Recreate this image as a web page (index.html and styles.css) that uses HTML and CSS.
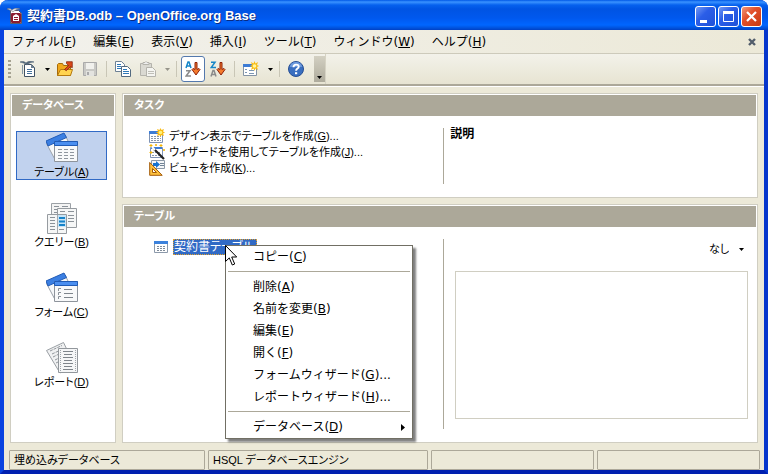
FILE: index.html
```html
<!DOCTYPE html>
<html lang="ja">
<head>
    <meta charset="UTF-8">
    <meta name="viewport" content="width=device-width, initial-scale=1.0">
    <title>契約書DB.odb – OpenOffice.org Base</title>
    <link rel="stylesheet" href="styles.css">
</head>
<body>
    <div class="window">
        <header class="titlebar">
            <svg class="app-icon" width="16" height="16" viewBox="0 0 16 16">
                <path d="M3.500 2.500h8l3 3v10h-11z" fill="#fff" stroke="#5a5a6a"/>
                <path d="M0 1c3-1 4 0 5 1 2-2 5-2 8-1-3 0-5 1-7 3C4 2 2 2 0 1z" fill="#e4e8f0" stroke="#666" stroke-width=".5"/>
                <rect x="4" y="5" width="10" height="10" rx="1" fill="#8c1d30"/>
                <path d="M6 8l3-2 3 2v5H6z" fill="#fff"/>
                <path d="M7 9.500h4M7 11.500h4" stroke="#8c1d30"/>
            </svg>
            <h1>契約書DB.odb – OpenOffice.org Base</h1>
            <div class="window-buttons">
                <button class="win-btn" aria-label="最小化"><svg width="19" height="19" viewBox="0 0 19 19"><path d="M4 13h7v3H4z" fill="#fff"/></svg></button>
                <button class="win-btn" aria-label="最大化"><svg width="19" height="19" viewBox="0 0 19 19"><path d="M4.500 5.500h10v9h-10z" fill="none" stroke="#fff"/><path d="M4 4h11v3H4z" fill="#fff"/></svg></button>
                <button class="win-btn close" aria-label="閉じる"><svg width="19" height="19" viewBox="0 0 19 19"><path d="M5 5l9 9M14 5l-9 9" stroke="#fff" stroke-width="2.200"/></svg></button>
            </div>
        </header>

        <nav class="menubar">
            <button>ファイル(<u>F</u>)</button>
            <button>編集(<u>E</u>)</button>
            <button>表示(<u>V</u>)</button>
            <button>挿入(<u>I</u>)</button>
            <button>ツール(<u>T</u>)</button>
            <button>ウィンドウ(<u>W</u>)</button>
            <button>ヘルプ(<u>H</u>)</button>
            <button class="close-doc" aria-label="ドキュメントを閉じる"><svg width="8" height="8" viewBox="0 0 8 8"><path d="M1 1l6 6M7 1L1 7" stroke="#525d6b" stroke-width="2.400"/></svg></button>
        </nav>

        <div class="toolbar">
            <span class="grip"></span>
            <button class="tool" aria-label="新規作成">
                <svg width="16" height="16" viewBox="0 0 16 16">
                    <path d="M4.500 3.500h7l3 3v9h-10z" fill="#fff" stroke="#3f5163"/>
                    <path d="M11 3v4h4z" fill="#6f8191"/>
                    <path d="M0 1c3-1 5 0 6 1 2-2 5-2 8-1-3 0-5 1-7 3-2-2-4-2-7-3z" fill="#54687a" stroke="#54687a" stroke-width=".6"/>
                    <path d="M7 8.500h5M7 10.500h5M7 12.500h5" stroke="#45719b"/>
                    <path d="M2.500 4v9" stroke="#8798a6"/>
                </svg>
            </button>
            <button class="drop" aria-label="新規作成メニュー"><svg width="5" height="3" viewBox="0 0 5 3"><path d="M0 0h5L2.500 3z"/></svg></button>
            <button class="tool" aria-label="開く">
                <svg width="16" height="16" viewBox="0 0 16 16">
                    <path d="M.5 14.500V3.500l1-1h4l1 2h7v10z" fill="#f0a81c" stroke="#a66a08"/>
                    <path d="M.5 14.500l3-6h12l-2 6z" fill="#ffd34f" stroke="#b57a10"/>
                    <path d="M7.500 8.500l4-4-2-2V.7h5.800v6l-2-1-4 4z" fill="#d9481a" stroke="#7c1d0a" stroke-width=".7"/>
                </svg>
            </button>
            <button class="tool" aria-label="保存" disabled>
                <svg width="16" height="16" viewBox="0 0 16 16">
                    <path d="M1.500 1.500h13v13h-13z" fill="#c9c9c5" stroke="#aaa"/>
                    <path d="M4 2h8v6H4z" fill="#f1f1ed"/><path d="M4 10h8v5H4z" fill="#e3e3df"/>
                    <path d="M5 11h2v3H5z" fill="#aaa"/>
                </svg>
            </button>
            <span class="separator"></span>
            <button class="tool" aria-label="コピー">
                <svg width="16" height="16" viewBox="0 0 16 16">
                    <path d="M.5.5h6l3 3v7h-9z" fill="#fff" stroke="#6d8194"/>
                    <path d="M2 3.500h4M2 5.500h4M2 7.500h4" stroke="#2f79b8"/>
                    <path d="M6.500 5.500h6l3 3v7h-9z" fill="#fff" stroke="#536a80"/>
                    <path d="M8 8.500h4M8 10.500h6M8 12.500h6" stroke="#2f79b8"/>
                </svg>
            </button>
            <button class="tool" aria-label="貼り付け" disabled>
                <svg width="16" height="16" viewBox="0 0 16 16">
                    <path d="M.5 2.500h11v12H.5z" fill="#dad9d2" stroke="#b4b3ac"/>
                    <path d="M3 1.500h2l1-1 1 1h2v2H3z" fill="#eee" stroke="#b4b3ac"/>
                    <path d="M6.500 6.500h6l3 3v6h-9z" fill="#f5f5f1" stroke="#b4b3ac"/>
                    <path d="M8 10.500h6M8 12.500h6" stroke="#c0bfb8"/>
                </svg>
            </button>
            <button class="drop" aria-label="貼り付けメニュー" disabled><svg width="5" height="3" viewBox="0 0 5 3"><path d="M0 0h5L2.500 3z" fill="#96948a"/></svg></button>
            <span class="separator"></span>
            <button class="tool pressed" aria-label="昇順で並べ替え">
                <svg width="16" height="16" viewBox="0 0 16 16">
                    <path d="M1 7l2-6h1l2 6M2 5h3" fill="none" stroke="#1686c9" stroke-width="1.500"/>
                    <path d="M1 9.800h4L1.200 15H6" fill="none" stroke="#8b8b8b" stroke-width="1.500"/>
                    <path d="M10 1.500h2v7l2-1 1 1-4 5.500-4-5.500 1-1 2 1z" fill="#f47a2c" stroke="#8e2109"/>
                </svg>
            </button>
            <button class="tool" aria-label="降順で並べ替え">
                <svg width="16" height="16" viewBox="0 0 16 16">
                    <path d="M1 1.200h4L1.200 6.500H6" fill="none" stroke="#1686c9" stroke-width="1.500"/>
                    <path d="M1 15.500l2-6h1l2 6M2 13.500h3" fill="none" stroke="#8b8b8b" stroke-width="1.500"/>
                    <path d="M10 1.500h2v7l2-1 1 1-4 5.500-4-5.500 1-1 2 1z" fill="#f47a2c" stroke="#8e2109"/>
                </svg>
            </button>
            <span class="separator"></span>
            <button class="tool" aria-label="フォーム">
                <svg width="16" height="16" viewBox="0 0 16 16">
                    <path d="M.5 3.500h13v11H.5z" fill="#fff" stroke="#8494a5"/>
                    <path d="M0 3h10v3H0z" fill="#3d7cd4"/>
                    <path d="M2 8.500h2M2 11.500h2M6 9.500h5M6 12.500h5" stroke="#7b96b4"/>
                    <path d="M11.500 0l1 2.500L15 1l-1 3 2 1-2 1 1 3-2.500-1.500-1 2.500-1-2.500L8 9l1-3-2-1 2-1-1-3 2.500 1.500z" fill="#f9bd16"/>
                    <circle cx="11.500" cy="5" r="1.800" fill="#fff5a0"/>
                </svg>
            </button>
            <button class="drop" aria-label="フォームメニュー"><svg width="5" height="3" viewBox="0 0 5 3"><path d="M0 0h5L2.500 3z"/></svg></button>
            <span class="separator"></span>
            <button class="tool" aria-label="ヘルプ">
                <svg width="16" height="16" viewBox="0 0 16 16">
                    <circle cx="8" cy="8" r="7.500" fill="#3a6fc0" stroke="#274f94"/>
                    <path d="M2 6a6 5 0 0 1 12 0z" fill="#6d9add"/>
                    <path d="M5.500 6.200c0-3.500 5.200-3.300 5.200-.5 0 2-2.600 1.800-2.600 4" fill="none" stroke="#fff" stroke-width="1.900"/>
                    <path d="M7 11.200h2.200v2H7z" fill="#fff"/>
                </svg>
            </button>
            <button class="overflow" aria-label="ツールバーの設定"><svg width="5" height="3" viewBox="0 0 5 3"><path d="M0 0h5L2.500 3z"/></svg></button>
            <span class="toolbar-end"></span>
        </div>

        <main class="workspace">
            <aside class="panel sidebar">
                <h2>データベース</h2>
                <div class="db-items">
                    <button class="db-item selected">
                        <svg width="32" height="32" viewBox="0 0 32 32">
                            <path d="M.5 11.500l9 17H22V9L19 3z" fill="#f6f8fa" stroke="#9aa0a8"/>
                            <path d="M0 9L18 1l2.500 4.500L2 14z" fill="#3b7fe2" stroke="#215bb5"/>
                            <path d="M8.500 9.500h23v20h-23z" fill="#f8f9fa" stroke="#8e949c"/>
                            <path d="M8.500 9.500h23v4h-23z" fill="#4b8ff0" stroke="#215bb5"/>
                            <path d="M12 17.500h16M12 20.500h16M12 23.500h16M12 26.500h16" stroke="#8f969e" stroke-dasharray="4 2"/>
                        </svg>
                        <span>テーブル(<u>A</u>)</span>
                    </button>
                    <button class="db-item">
                        <svg width="32" height="32" viewBox="0 0 32 32">
                            <path d="M5.500 1.500h19v18h-19z" fill="#f4f4f4" stroke="#9ca1a6"/>
                            <path d="M8 4.500h5M16 4.500h6M8 7.500h5M8 10.500h3" stroke="#8b9299"/>
                            <path d="M11.500 6.500h19v19h-19z" fill="#f6f7f7" stroke="#969ba0"/>
                            <path d="M14 9.500h5M22 9.500h6M22 13.500h6M22 16.500h6M22 19.500h6" stroke="#8b9299"/>
                            <path d="M1.500 12.500h19v19h-19z" fill="#f5f6f6" stroke="#969ba0"/>
                            <path d="M11.500 13v18" stroke="#a4a9ae"/>
                            <path d="M4 15.500h5M4 18.500h5M4 21.500h5M4 24.500h5M4 27.500h5M13 27.500h5" stroke="#8b9299"/>
                            <path d="M12 13h8v12h-8z" fill="#c7e4f7"/>
                            <path d="M13 16h6M13 19.500h6M13 23h6" stroke="#1783c9" stroke-width="2"/>
                        </svg>
                        <span>クエリー(<u>B</u>)</span>
                    </button>
                    <button class="db-item">
                        <svg width="32" height="32" viewBox="0 0 32 32">
                            <path d="M.5 11.500l9 17H22V9L19 3z" fill="#f6f8fa" stroke="#9aa0a8"/>
                            <path d="M0 9L18 1l2.500 4.500L2 14z" fill="#3b7fe2" stroke="#215bb5"/>
                            <path d="M8.500 9.500h23v20h-23z" fill="#f8f9fa" stroke="#8e949c"/>
                            <path d="M8.500 9.500h23v4h-23z" fill="#4b8ff0" stroke="#215bb5"/>
                            <path d="M18 17.500h8M18 21.500h9M18 25.500h9" stroke="#7e858c"/>
                            <path d="M12.500 19v-2.500H15M12.500 23v-2.500H15M12.500 27v-2.500H15" fill="none" stroke="#8a9199"/>
                        </svg>
                        <span>フォーム(<u>C</u>)</span>
                    </button>
                    <button class="db-item">
                        <svg width="32" height="32" viewBox="0 0 32 32">
                            <path d="M.5 8.500l17-8L28 22l-14 9z" fill="#f0f1f2" stroke="#9a9fa4"/>
                            <path d="M4 9l12-5.500M6 12l12-5.500M7 15l8-4M9 18l5-2.500M10 21l4-2" stroke="#92979c" stroke-dasharray="3 1"/>
                            <path d="M12.500 6.500h19v24h-19z" fill="#f5f6f7" stroke="#92979c"/>
                            <path d="M17 9.500h10M18 12.500h8M17 15.500h10M18 18.500h8M17 21.500h10M18 24.500h8M17 27.500h10" stroke="#7f858b"/>
                            <path d="M14.500 8v22M29.500 8v22" stroke="#a0a5aa" stroke-dasharray="1 1"/>
                        </svg>
                        <span>レポート(<u>D</u>)</span>
                    </button>
                </div>
            </aside>

            <div class="content">
                <section class="panel tasks">
                    <h2>タスク</h2>
                    <div class="columns">
                        <ul class="list">
                            <li><a href="#">
                                <svg width="16" height="16" viewBox="0 0 16 16">
                                    <path d="M.5 3.500h13v11H.5z" fill="#fff" stroke="#7f93b5"/>
                                    <path d="M0 3h10v3H0z" fill="#3d7cd4"/>
                                    <path d="M2 8.500h10M2 10.500h10M2 12.500h10" stroke="#8898ab" stroke-dasharray="2 1"/>
                                    <path d="M11.500 0l1 2L15 1l-1 2.500 2 1-2 1 1 2.500-2.500-1-1 2-1-2L8 8l1-2.500-2-1 2-1L8 1l2.500 1z" fill="#f9b910"/>
                                    <circle cx="11.500" cy="4.500" r="1.800" fill="#fff27c"/>
                                </svg>
                                <span>デザイン表示でテーブルを作成(<u>G</u>)...</span></a></li>
                            <li><a href="#">
                                <svg width="16" height="16" viewBox="0 0 16 16">
                                    <path d="M1.500 3.500h12v10h-12z" fill="#fff" stroke="#7f93b5"/>
                                    <path d="M2 3h11v2H2z" fill="#3d7cd4"/>
                                    <path d="M3 8.500h9M3 11.500h9" stroke="#8898ab" stroke-dasharray="2 1"/>
                                    <path d="M5 5l10 10" stroke="#222" stroke-width="2.200"/>
                                    <path d="M3 3l3 3" stroke="#fff" stroke-width="2"/>
                                    <path d="M2 0v3M.5 1.500h3M7 0v2M6 1h2M12 0v3M10.500 1.500h3M2 7v3M.5 8.500h3M15 5v2M14 6h2" stroke="#f5b400"/>
                                </svg>
                                <span>ウィザードを使用してテーブルを作成(<u>J</u>)...</span></a></li>
                            <li><a href="#">
                                <svg width="16" height="16" viewBox="0 0 16 16">
                                    <path d="M2.500.5h13v8h-13z" fill="#f4f6f8" stroke="#8c99a8"/>
                                    <path d="M11 3.500h4M11 5.500h4" stroke="#718396"/>
                                    <path d="M4 3h3V1l4 3.500L7 8V6H4z" fill="#1673d1"/>
                                    <path d="M.7 2.500v12.800h12.500z" fill="#ffc23d" stroke="#a35b09"/>
                                    <path d="M3.500 8.500v4h4z" fill="#fff" stroke="#a35b09"/>
                                </svg>
                                <span>ビューを作成(<u>K</u>)...</span></a></li>
                        </ul>
                        <div class="description">
                            <h3>説明</h3>
                        </div>
                    </div>
                </section>

                <section class="panel tables">
                    <h2>テーブル</h2>
                    <div class="columns">
                        <div class="table-list">
                            <div class="table-entry">
                                <svg width="14" height="14" viewBox="0 0 14 14">
                                    <path d="M.5 1.500h13v11H.5z" fill="#fff" stroke="#8c99aa"/>
                                    <path d="M0 1h14v3H0z" fill="#3c82dc"/>
                                    <path d="M3 6.500h8M3 8.500h8M3 10.500h8" stroke="#7f8b99" stroke-dasharray="2 1"/>
                                </svg>
                                <a href="#" class="table-name">契約書テーブル</a>

                                <div class="context-menu" role="menu">
                                    <button role="menuitem">コピー(<u>C</u>)</button>
                                    <hr>
                                    <button role="menuitem">削除(<u>A</u>)</button>
                                    <button role="menuitem">名前を変更(<u>B</u>)</button>
                                    <button role="menuitem">編集(<u>E</u>)</button>
                                    <button role="menuitem">開く(<u>F</u>)</button>
                                    <button role="menuitem">フォームウィザード(<u>G</u>)...</button>
                                    <button role="menuitem">レポートウィザード(<u>H</u>)...</button>
                                    <hr>
                                    <button role="menuitem">データベース(<u>D</u>)<svg class="submenu" width="4" height="7" viewBox="0 0 4 7"><path d="M0 0v7l4-3.500z"/></svg></button>
                                </div>
                                <svg class="cursor" width="13" height="21" viewBox="0 0 13 21"><path d="M.5.5v16l3.800-3.600 3 7.100 2.400-1-3-7h5z" fill="#fff" stroke="#000"/></svg>
                            </div>
                        </div>
                        <div class="preview">
                            <div class="preview-mode">
                                <select aria-label="プレビュー">
                                    <option>なし</option>
                                    <option>ドキュメント</option>
                                </select>
                                <svg width="5" height="3" viewBox="0 0 5 3"><path d="M0 0h5L2.500 3z"/></svg>
                            </div>
                            <div class="preview-box"></div>
                        </div>
                    </div>
                </section>
            </div>
        </main>

        <footer class="statusbar">
            <span class="status-field">埋め込みデータベース</span>
            <span class="status-field">HSQL データベースエンジン</span>
            <span class="status-field"></span>
            <span class="status-field"></span>
        </footer>
    </div>
</body>
</html>
```

FILE: styles.css
```css
* {
    box-sizing: border-box;
}
body {
    margin: 0;
    background: #fff;
    color: #000;
    font-family: "Liberation Sans", "Noto Sans CJK JP", sans-serif;
    font-size: 11px;
    line-height: 16px;
    font-feature-settings: "palt";
}
h1, h2, h3, ul {
    margin: 0;
    padding: 0;
}
button, select {
    margin: 0;
    padding: 0;
    border: none;
    background: none;
    color: inherit;
    font: inherit;
    font-feature-settings: inherit;
}
svg {
    display: block;
    flex: none;
}
a {
    color: inherit;
    text-decoration: none;
}
.window {
    display: flex;
    flex-direction: column;
    min-height: 100vh;
    border: 4px solid #0842e0;
    border-top: none;
    border-right-color: #0636cc;
    border-bottom-color: #0020b0;
    border-radius: 8px 8px 0 0;
    background: #ece9d8;
}

/* title bar */
.titlebar {
    display: flex;
    align-items: center;
    gap: 4px;
    height: 30px;
    margin: 0 -4px;
    padding: 2px 6px 0 7px;
    border-radius: 8px 8px 0 0;
    background: linear-gradient(#0058e6 0, #3a93ff 2px, #0661ee 5px, #0054e3 9px, #0058ee 18px, #0066ff 25px, #0052dc 28px, #0040c4 30px);
}
.titlebar h1 {
    flex: 1;
    color: #fff;
    font-size: 13px;
    font-feature-settings: normal;
    text-shadow: 1px 1px #0a2a80;
}
.window-buttons {
    display: flex;
    gap: 2px;
}
.win-btn {
    width: 21px;
    height: 21px;
    border: 1px solid #fff;
    border-radius: 3px;
    background: linear-gradient(135deg, #7399f3, #2b5ee8 40%, #1e51d8);
}
.win-btn.close {
    background: linear-gradient(135deg, #f0987c, #e2502a 40%, #c93a10);
}

/* menu bar */
.menubar {
    display: flex;
    align-items: center;
    gap: 17px;
    height: 24px;
    padding: 0 8px;
    border-bottom: 1px solid #cdcabb;
    background: linear-gradient(90deg, #f2f1ec, #ece9d8);
    font-family: "DejaVu Sans", "Noto Sans CJK JP", sans-serif;
    font-size: 12px;
    font-feature-settings: normal;
}
.menubar .close-doc {
    margin-left: auto;
}

/* tool bar */
.toolbar {
    display: flex;
    align-items: center;
    height: 32px;
    padding-left: 4px;
    border-bottom: 2px solid #aca899;
    background: linear-gradient(#f3f2ea, #e7e4d2);
}
.grip {
    width: 3px;
    height: 18px;
    margin-right: 5px;
    background: repeating-linear-gradient(#a5a291 0 2px, transparent 2px 4px);
}
.tool {
    display: flex;
    align-items: center;
    justify-content: center;
    width: 24px;
    height: 26px;
    margin-right: 1px;
    border: 1px solid transparent;
    border-radius: 3px;
}
.tool.pressed {
    border-color: #5479ad;
    background: #fff;
}
.drop {
    display: flex;
    justify-content: center;
    width: 12px;
}
.separator {
    width: 1px;
    height: 16px;
    margin: 0 4px 0 3px;
    background: #c9c6b6;
}
.overflow {
    display: flex;
    align-items: flex-end;
    justify-content: center;
    width: 11px;
    height: 26px;
    margin-left: 5px;
    padding-bottom: 3px;
    background: linear-gradient(#d3d0c2, #aeab9c);
}
.toolbar-end {
    align-self: stretch;
    width: 1px;
    background: #d6d3c4;
}

/* work area */
.workspace {
    display: flex;
    flex: 1;
    gap: 6px;
    padding: 6px;
    border-top: 1px solid #fff;
}
.panel {
    padding: 1px;
    border: 1px solid #d0cec2;
    background: #fff;
}
.panel h2 {
    height: 21px;
    padding-left: 10px;
    background: #aca899;
    color: #fff;
    font-size: 11px;
    line-height: 21px;
}
.sidebar {
    flex: none;
    width: 106px;
}
.db-items {
    display: flex;
    flex-direction: column;
    gap: 21px;
    padding: 15px 7px 15px 4px;
}
.db-item {
    display: flex;
    flex-direction: column;
    align-items: center;
    height: 49px;
    border: 1px solid transparent;
}
.db-item.selected {
    border-color: #316ac5;
    background: #c1d2ee;
}
.content {
    display: flex;
    flex: 1;
    flex-direction: column;
    gap: 6px;
}
.columns {
    display: grid;
    flex: 1;
    grid-template-columns: 51fr 50fr;
    padding: 12px 0;
}
.list {
    min-height: 56px;
    padding-left: 25px;
    list-style: none;
}
.list a {
    display: flex;
    gap: 4px;
}
.description {
    padding-left: 6px;
    border-left: 1px solid #aca899;
}
.description h3 {
    font-size: 12px;
    line-height: 12px;
    font-feature-settings: normal;
}
.tables {
    display: flex;
    flex: 1;
    flex-direction: column;
}
.table-list {
    padding-left: 30px;
}
.table-entry {
    position: relative;
    display: flex;
    align-items: center;
    gap: 5px;
}
.table-name {
    padding: 0 3px 0 1px;
    outline: 1px dotted #e0a030;
    outline-offset: -1px;
    background: #316ac5;
    color: #fff;
    font-size: 12px;
    line-height: 16px;
}
.preview {
    display: flex;
    flex-direction: column;
    padding: 0 8px 10px 11px;
    border-left: 1px solid #aca899;
}
.preview-mode {
    display: flex;
    align-items: center;
    align-self: flex-end;
    gap: 10px;
    margin: 2px 4px 14px 0;
}
.preview-mode select {
    appearance: none;
    width: 20px;
}
.preview-box {
    flex: 1;
    border: 1px solid #d0cec2;
}

/* context menu */
.context-menu {
    position: absolute;
    top: 6px;
    left: 71px;
    z-index: 1;
    width: 188px;
    border: 1px solid #716f64;
    background: #fff;
    box-shadow: 3px 3px 2px rgba(0, 0, 0, 0.5);
    font-family: "DejaVu Sans", "Noto Sans CJK JP", sans-serif;
    font-size: 12px;
    font-feature-settings: normal;
}
.context-menu button {
    display: flex;
    align-items: center;
    width: 100%;
    height: 22px;
    padding: 0 7px 0 27px;
}
.context-menu hr {
    height: 1px;
    margin: 3px 2px 4px;
    border: none;
    background: #aca899;
}
.submenu {
    margin-left: auto;
}
.cursor {
    position: absolute;
    top: 6px;
    left: 71px;
    z-index: 2;
}

/* status bar */
.statusbar {
    display: grid;
    grid-template-columns: 196fr 220fr 163fr 163fr;
    gap: 3px;
    padding: 1px 4px 0 5px;
}
.status-field {
    height: 20px;
    padding-left: 4px;
    border: 1px solid #aca899;
    border-radius: 1px;
    line-height: 18px;
}
```
